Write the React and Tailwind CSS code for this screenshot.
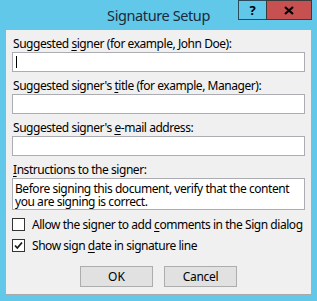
import React from "react";

const font = { fontFamily: '"Noto Sans", "Open Sans", Arial, sans-serif' };

function U({ children }) {
  return <span className="underline underline-offset-2 decoration-1">{children}</span>;
}

function Label({ children }) {
  return (
    <div className="h-[16px] leading-[16px] pl-[1px] text-[12px] tracking-[-0.45px] text-black whitespace-nowrap">{children}</div>
  );
}

function Input({ cursor }) {
  return (
    <div className="h-[20px] border border-[#abadb3] bg-white relative">
      {cursor && <div className="absolute left-[3px] top-[3px] w-[1px] h-[12px] bg-black" />}
    </div>
  );
}

function Check({ checked }) {
  return (
    <div className="w-[13px] h-[13px] shrink-0 border border-[#333333] bg-white flex items-center justify-center">
      {checked && (
        <svg width="11" height="11" viewBox="0 0 11 11">
          <path d="M2 5.5 L4.3 8 L9 2.5" fill="none" stroke="#1a1a1a" strokeWidth="1.8" />
        </svg>
      )}
    </div>
  );
}

export default function App() {
  return (
    <div className="w-[317px] h-[301px] bg-[#62c8ea] flex flex-col" style={font}>
      <div className="h-[30px] relative flex items-start justify-center">
        <div className="pt-[5px] text-[14.5px] tracking-[-0.4px] leading-[20px] text-[#1b2b3a]">Signature Setup</div>
        <div className="absolute top-0 left-[238px] flex">
          <div className="w-[28px] h-[20px] border border-[#2d4a5a] border-r-0 flex items-center justify-center text-[13px] font-bold text-black leading-none">?</div>
          <div className="w-[46px] h-[20px] bg-[#c75050] border border-[#3a3a3a] flex items-center justify-center">
            <svg width="10" height="9" viewBox="0 0 10 9">
              <path d="M1 1 L9 8 M9 1 L1 8" stroke="#000" strokeWidth="2.2" />
            </svg>
          </div>
        </div>
      </div>
      <div className="mx-[6px] h-[265px] bg-[#f0f0f0] border-b border-[#a9a9a9] px-[6px] pt-[6px] flex flex-col">
        <Label>Suggested <U>s</U>igner (for example, John Doe):</Label>
        <Input cursor />
        <div className="h-[6px]" />
        <Label>Suggested signer's <U>t</U>itle (for example, Manager):</Label>
        <Input />
        <div className="h-[6px]" />
        <Label>Suggested signer's <U>e</U>-mail address:</Label>
        <Input />
        <div className="h-[6px]" />
        <Label><U>I</U>nstructions to the signer:</Label>
        <div className="h-[32px] border border-[#abadb3] bg-white px-[2px] pt-[3px] text-[12px] tracking-[-0.45px] leading-[13px] text-black">
          Before signing this document, verify that the content you are signing is correct.
        </div>
        <div className="mt-[8px] flex items-center gap-[7px] text-[12px] tracking-[-0.45px] leading-[13px] text-black whitespace-nowrap">
          <Check />
          <span>Allow the signer to add <U>c</U>omments in the Sign dialog</span>
        </div>
        <div className="mt-[8px] flex items-center gap-[7px] text-[12px] tracking-[-0.45px] leading-[13px] text-black whitespace-nowrap">
          <Check checked />
          <span>Show sign <U>d</U>ate in signature line</span>
        </div>
        <div className="mt-[14px] flex gap-[11px] pl-[68px]">
          <div className="w-[73px] h-[21px] bg-[#e1e1e1] border border-[#adadad] flex items-center justify-center text-[12px] text-black">OK</div>
          <div className="w-[73px] h-[21px] bg-[#e1e1e1] border border-[#adadad] flex items-center justify-center text-[12px] tracking-[-0.3px] text-black">Cancel</div>
        </div>
      </div>
    </div>
  );
}
